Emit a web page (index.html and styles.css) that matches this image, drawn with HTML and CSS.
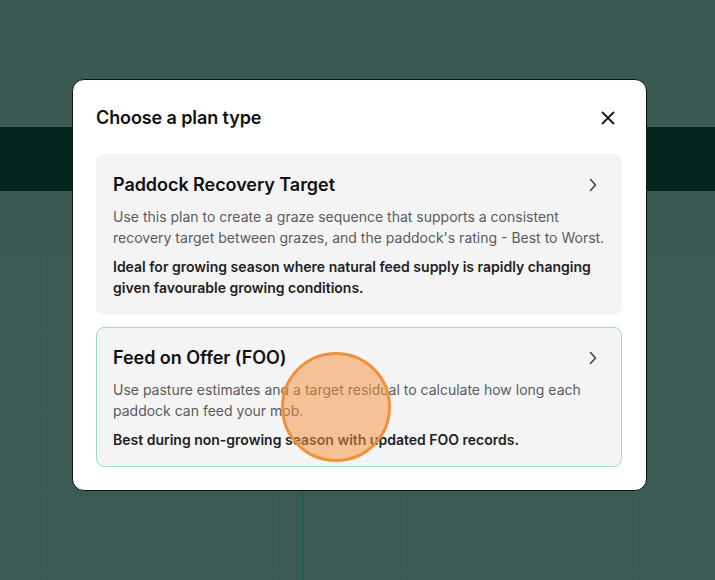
FILE: index.html
```html
<!DOCTYPE html>
<html lang="en">
<head>
<meta charset="utf-8">
<title>Choose a plan type</title>
<link rel="stylesheet" href="styles.css">
</head>
<body>
<div class="app">
  <div class="top"></div>
  <div class="band"></div>
  <div class="sub"></div>
  <div class="grid"><div class="divider"></div></div>
</div>
<div class="overlay">
  <div class="modal" role="dialog">
    <div class="modal-head">
      <h2 class="modal-title">Choose a plan type</h2>
      <button class="close" aria-label="Close">
        <svg width="14" height="14" viewBox="0 0 14 14"><path d="M1.5 1.5 L12.5 12.5 M12.5 1.5 L1.5 12.5" stroke="#1a1a1a" stroke-width="1.8" stroke-linecap="round"/></svg>
      </button>
    </div>
    <div class="cards">
      <div class="card">
        <div class="card-head">
          <h3 class="card-title">Paddock Recovery Target</h3>
          <svg class="chev" width="8" height="14" viewBox="0 0 8 14"><path d="M1.5 1.5 L6.5 7 L1.5 12.5" fill="none" stroke="#444" stroke-width="1.6" stroke-linecap="round" stroke-linejoin="round"/></svg>
        </div>
        <p class="card-desc">Use this plan to create a graze sequence that supports a consistent recovery target between grazes, and the paddock's rating - Best to Worst.</p>
        <p class="card-note">Ideal for growing season where natural feed supply is rapidly changing given favourable growing conditions.</p>
      </div>
      <div class="card card-active">
        <div class="card-head">
          <h3 class="card-title">Feed on Offer (FOO)</h3>
          <svg class="chev" width="8" height="14" viewBox="0 0 8 14"><path d="M1.5 1.5 L6.5 7 L1.5 12.5" fill="none" stroke="#444" stroke-width="1.6" stroke-linecap="round" stroke-linejoin="round"/></svg>
        </div>
        <p class="card-desc">Use pasture estimates and a target residual to calculate how long each paddock can feed your mob.</p>
        <p class="card-note">Best during non-growing season with updated FOO records.</p>
      </div>
    </div>
  </div>
</div>
<div class="cursor"></div>
</body>
</html>
```
FILE: styles.css
```css
* { box-sizing: border-box; }
html, body { margin: 0; padding: 0; }
body {
  width: 715px;
  height: 580px;
  overflow: hidden;
  position: relative;
  font-family: Inter, "Noto Sans", sans-serif;
  background: #3a5952;
}
.app { display: flex; flex-direction: column; height: 580px; }
.top { height: 127px; background: #3a5952; }
.band { height: 64px; background: #03261f; }
.sub { height: 64px; background: #3a5952; border-bottom: 1px solid #38564f; }
.grid {
  flex: 1;
  position: relative;
  background-color: #3b5a53;
  background-image:
    linear-gradient(to right, rgba(0,0,0,0.025) 1px, transparent 1px),
    linear-gradient(to bottom, rgba(0,0,0,0.025) 1px, transparent 1px);
  background-size: 45px 80px;
  background-position: 2px 0;
}
.divider {
  position: absolute;
  left: 302px;
  top: 0;
  bottom: 0;
  width: 2px;
  background: #1f5e51;
}
.overlay {
  position: absolute;
  inset: 0;
  padding: 79px 0 0 72px;
}
.modal {
  width: 575px;
  background: #fff;
  border: 1px solid #111;
  border-radius: 12px;
  padding: 24px 24px 23px 23px;
}
.modal-head {
  display: flex;
  align-items: center;
  justify-content: space-between;
  margin-bottom: 22px;
}
.modal-title {
  margin: 0;
  font-size: 18px;
  line-height: 28px;
  font-weight: 600;
  color: #111;
  letter-spacing: -0.1px;
}
.close {
  border: 0;
  background: none;
  padding: 0;
  margin-right: 7px;
  width: 14px;
  height: 14px;
  display: flex;
}
.cards { display: flex; flex-direction: column; gap: 12px; }
.card {
  background: #f4f4f4;
  border: 1px solid #f4f4f4;
  border-radius: 8px;
  padding: 16px;
}
.card-active { border-color: #9fdcc6; }
.card-head {
  display: flex;
  align-items: center;
  justify-content: space-between;
  margin-bottom: 7px;
}
.card-title {
  margin: 0;
  font-size: 18px;
  line-height: 28px;
  font-weight: 600;
  color: #111;
  letter-spacing: -0.05px;
}
.chev { margin-right: 8px; }
.card-desc {
  margin: 0 0 8px;
  font-size: 14px;
  line-height: 21px;
  color: #5b5b5b;
}
.card-note {
  margin: 0;
  font-size: 14px;
  line-height: 21px;
  font-weight: 600;
  color: #222;
}
.cursor {
  position: absolute;
  left: 281px;
  top: 352px;
  width: 110px;
  height: 110px;
  border-radius: 50%;
  background: rgba(245, 145, 65, 0.52);
  border: 3px solid #f0913c;
}
```
